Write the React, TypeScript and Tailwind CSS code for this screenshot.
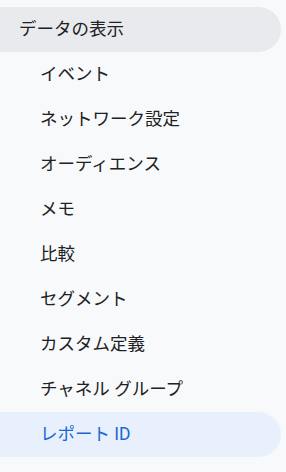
import React from 'react';

const items = [
  'イベント',
  'ネットワーク設定',
  'オーディエンス',
  'メモ',
  '比較',
  'セグメント',
  'カスタム定義',
  'チャネル グループ',
];

export default function App() {
  return (
    <div
      className="w-[286px] h-[472px] bg-[#f8f9fa] pt-[7px] pr-[5px] overflow-hidden"
      style={{ fontFamily: 'Roboto, "Noto Sans CJK JP", sans-serif' }}
    >
      <div className="h-[45px] flex items-center pl-[19px] bg-[#e8eaed] rounded-r-full text-[17.5px] font-normal text-[#202124]">
        データの表示
      </div>
      {items.map((label) => (
        <div
          key={label}
          className="h-[45px] flex items-center pl-[40px] text-[17.5px] font-normal text-[#202124]"
        >
          {label}
        </div>
      ))}
      <div className="h-[45px] flex items-center pl-[40px] bg-[#e8f0fe] rounded-r-full text-[17.5px] font-normal text-[#1967d2]">
        レポート ID
      </div>
    </div>
  );
}
